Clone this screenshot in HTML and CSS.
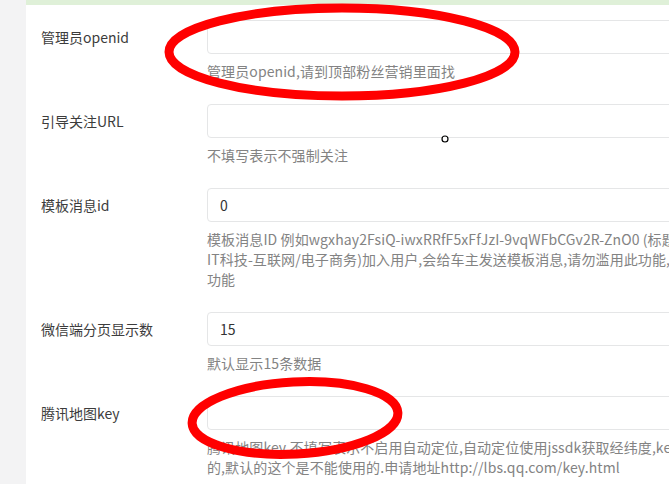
FILE: index.html
```html
<!DOCTYPE html>
<html lang="zh-CN">
<head>
  <meta charset="UTF-8">
  <title>系统设置</title>
  <link rel="stylesheet" href="styles.css">
</head>
<body>
  <div class="page">
    <div class="panel">
      <form class="settings-form">
        <!-- 管理员 -->
        <div class="form-group">
          <label class="control-label">管理员openid</label>
          <div class="field">
            <input type="text" class="form-control" value="">
            <span class="help-block">管理员openid,请到顶部粉丝营销里面找</span>
          </div>
        </div>

        <div class="form-group">
          <label class="control-label">引导关注URL</label>
          <div class="field">
            <input type="text" class="form-control" value="">
            <span class="help-block">不填写表示不强制关注</span>
          </div>
        </div>

        <div class="form-group">
          <label class="control-label">模板消息id</label>
          <div class="field">
            <input type="text" class="form-control" value="0">
            <span class="help-block">模板消息ID 例如wgxhay2FsiQ-iwxRRfF5xFfJzI-9vqWFbCGv2R-ZnO0 (标题:新用户加入通知 行业:<br>IT科技-互联网/电子商务)加入用户,会给车主发送模板消息,请勿滥用此功能,不填写表示不启用此<br>功能</span>
          </div>
        </div>

        <div class="form-group">
          <label class="control-label">微信端分页显示数</label>
          <div class="field">
            <input type="text" class="form-control" value="15">
            <span class="help-block">默认显示15条数据</span>
          </div>
        </div>

        <div class="form-group">
          <label class="control-label">腾讯地图key</label>
          <div class="field">
            <input type="text" class="form-control" value="">
            <span class="help-block">腾讯地图key,不填写表示不启用自动定位,自动定位使用jssdk获取经纬度,key是必须要自己申请<br>的,默认的这个是不能使用的.申请地址http://lbs.qq.com/key.html</span>
          </div>
        </div>
      </form>
    </div>

    <!-- 截图上的标注 -->
    <svg class="marks" width="669" height="484" viewBox="0 0 669 484">
      <ellipse cx="342" cy="52" rx="173" ry="44" fill="none" stroke="#ff0000" stroke-width="9"/>
      <ellipse cx="295" cy="418" rx="103" ry="36" fill="none" stroke="#ff0000" stroke-width="9" transform="rotate(-3 295 418)"/>
      <circle cx="445" cy="139" r="3" fill="#fff" stroke="#000" stroke-width="1.2"/>
    </svg>
  </div>
</body>
</html>
```

FILE: styles.css
```css
body {
  margin: 0;
  background: #f3f3f4;
  font-family: "Noto Sans CJK SC", "Noto Sans", sans-serif;
  font-size: 14px;
  color: #555;
  overflow: hidden;
}

.page {
  position: relative;
  padding-left: 26px;
  width: 1200px;
}

.panel {
  background: #fff;
  border-top: 5px solid #dff0d8;
  padding: 15px 15px 20px;
  min-height: 484px;
  box-sizing: border-box;
}

.form-group {
  display: flex;
  margin-bottom: 23px;
}

.control-label {
  width: 166px;
  flex-shrink: 0;
  padding-top: 7px;
  line-height: 20px;
  color: #3c3c3c;
}

.field {
  width: 900px;
}

.form-control {
  display: block;
  box-sizing: border-box;
  width: 100%;
  height: 34px;
  padding: 6px 12px;
  border: 1px solid #e5e6e7;
  border-radius: 4px;
  font-family: inherit;
  font-size: 14px;
  color: #333;
  background: #fff;
  outline: none;
}

.help-block {
  display: block;
  margin-top: 7px;
  line-height: 20px;
  color: #838383;
  letter-spacing: 0.1px;
  white-space: nowrap;
}

.marks {
  position: absolute;
  left: 0;
  top: 0;
  pointer-events: none;
}
```
